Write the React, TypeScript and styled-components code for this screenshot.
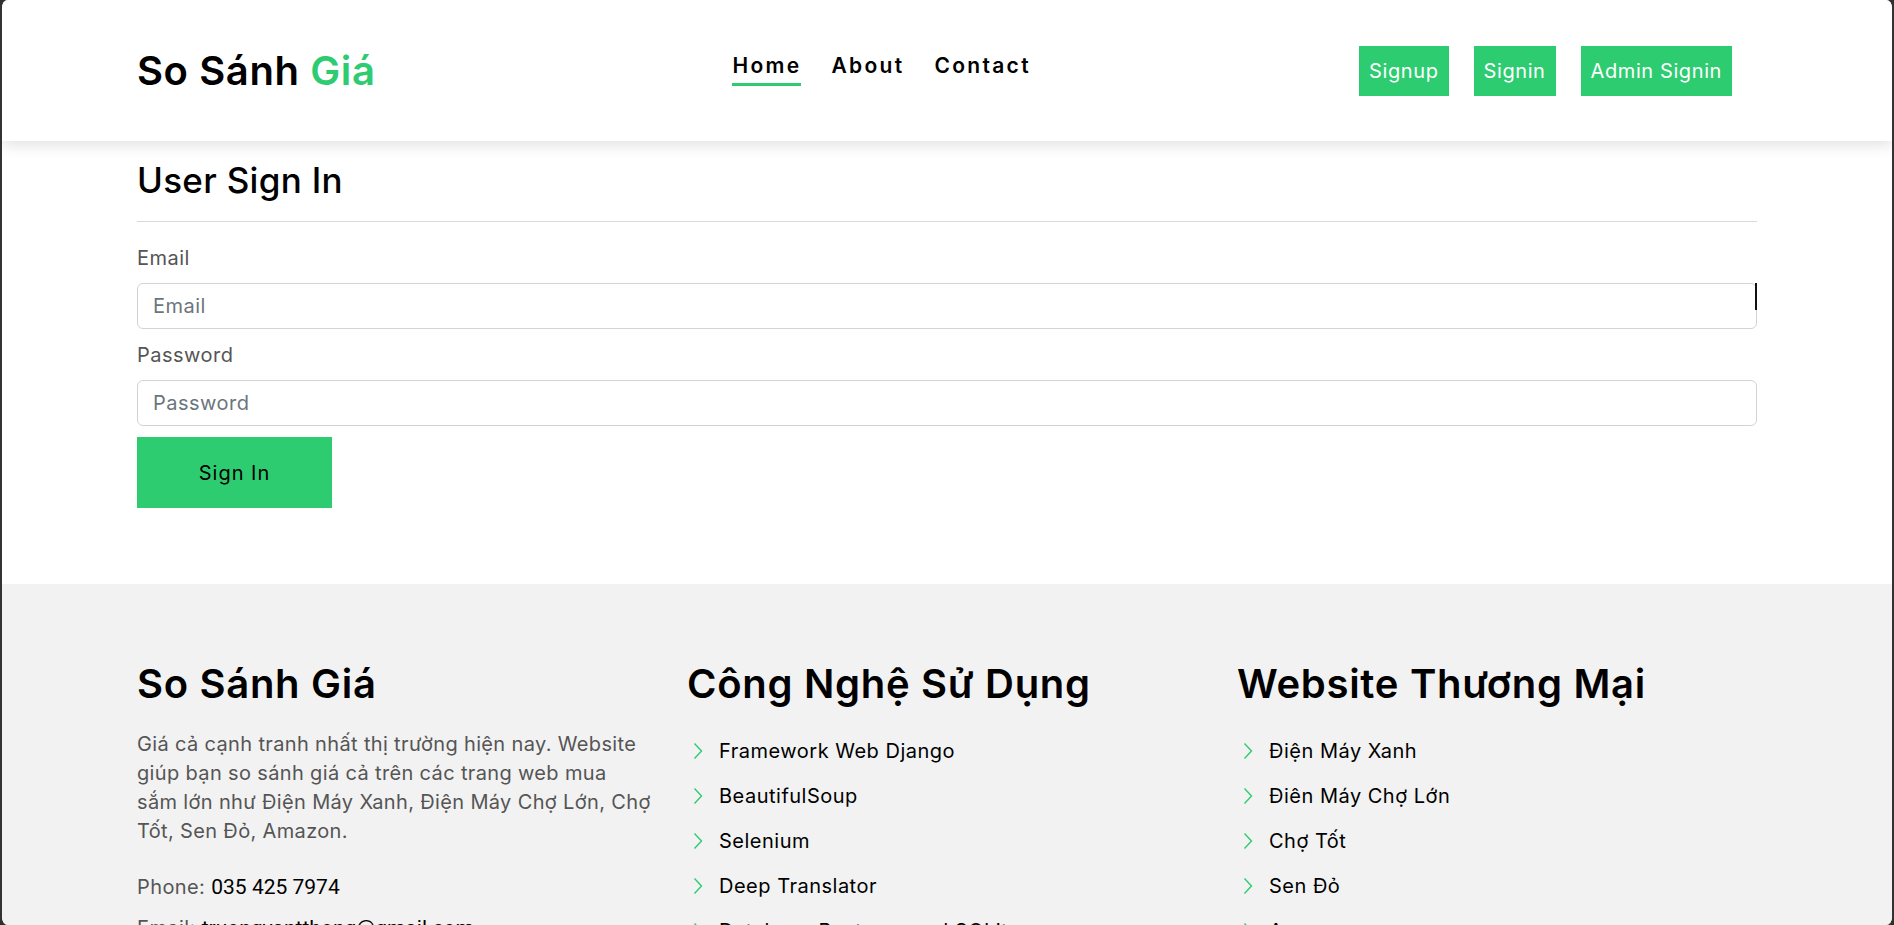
import React from "react";
import styled, { createGlobalStyle } from "styled-components";

const GREEN = "#2ecc71";

const Global = createGlobalStyle`
  html, body { margin: 0; padding: 0; background: #2f2f2f; }
  body { font-family: Inter, "Noto Sans", sans-serif; overflow: hidden; }
  * { box-sizing: border-box; }
`;

const Window = styled.div`
  height: 925px;
  background: #ffffff;
  border-left: 2px solid #333;
  border-right: 2px solid #333;
  border-radius: 8px;
  overflow: hidden;
  display: flex;
  flex-direction: column;
`;

const Container = styled.div`
  width: 1620px;
  margin: 0 auto;
`;

const Header = styled.header`
  position: relative;
  z-index: 2;
  height: 141px;
  background: #fff;
  box-shadow: 0 4px 14px rgba(0, 0, 0, 0.12);
  flex-shrink: 0;
`;

const HeaderInner = styled(Container)`
  height: 100%;
  display: flex;
  align-items: center;
`;

const Logo = styled.div`
  font-size: 40px;
  font-weight: 600;
  color: #000;
  letter-spacing: 0.6px;
  line-height: 48px;
  span { color: ${GREEN}; }
`;

const Nav = styled.nav`
  display: flex;
  gap: 30px;
  margin-left: 357px;
  align-self: flex-start;
  margin-top: 52px;
`;

const NavLink = styled.a<{ $active?: boolean }>`
  font-size: 21px;
  font-weight: 600;
  letter-spacing: 2.3px;
  color: #000;
  text-decoration: none;
  line-height: 28px;
  padding-bottom: 3px;
  border-bottom: 3px solid ${(p) => (p.$active ? GREEN : "transparent")};
`;

const Actions = styled.div`
  display: flex;
  gap: 25px;
  margin-left: auto;
  margin-right: 25px;
`;

const HeadButton = styled.a`
  height: 50px;
  display: flex;
  align-items: center;
  padding: 0 10px;
  background: ${GREEN};
  color: #fff;
  font-size: 20px;
  letter-spacing: 0.6px;
  text-decoration: none;
`;

const Main = styled(Container)`
  padding-top: 20px;
  padding-bottom: 76px;
  flex-shrink: 0;
`;

const Title = styled.h2`
  margin: 0;
  font-size: 35px;
  line-height: 38px;
  font-weight: 500;
  letter-spacing: 0.3px;
  color: #000;
`;

const Divider = styled.hr`
  margin: 22px 0 23px;
  border: 0;
  border-top: 1px solid #d9d9d9;
`;

const Field = styled.div`
  position: relative;
  margin-bottom: 13px;
`;

const Label = styled.label`
  display: block;
  font-size: 20px;
  letter-spacing: 0.5px;
  line-height: 26px;
  color: #555;
  margin-bottom: 12px;
`;

const Input = styled.input`
  display: block;
  width: 100%;
  height: 46px;
  padding: 0 15px;
  border: 1px solid #ced4da;
  border-radius: 6px;
  font-family: inherit;
  font-size: 20px;
  letter-spacing: 0.5px;
  color: #212529;
  background: #fff;
  &::placeholder { color: #6c757d; }
`;

const Cursor = styled.div`
  position: absolute;
  right: 0;
  top: 38px;
  width: 2px;
  height: 27px;
  background: #111;
`;

const SubmitButton = styled.button`
  margin-top: -2px;
  width: 195px;
  height: 71px;
  border: 0;
  background: ${GREEN};
  color: #000;
  font-family: inherit;
  font-size: 20px;
  letter-spacing: 1px;
`;

const Footer = styled.footer`
  flex: 1;
  background: #f2f2f2;
  padding-top: 78px;
`;

const Row = styled(Container)`
  display: grid;
  grid-template-columns: repeat(3, 1fr);
  column-gap: 30px;
`;

const Col = styled.div``;

const FootTitle = styled.h3`
  margin: 0;
  font-size: 40px;
  line-height: 44px;
  font-weight: 600;
  letter-spacing: 0.7px;
  color: #000;
`;

const Para = styled.p`
  margin: 24px 0 26px;
  font-size: 20px;
  letter-spacing: 0.35px;
  line-height: 29px;
  color: #555;
  white-space: nowrap;
`;

const Contact = styled.p`
  margin: 0 0 11px;
  font-size: 20px;
  letter-spacing: 0.4px;
  line-height: 30px;
  color: #555;
  b {
    font-weight: 400;
    letter-spacing: 0;
    color: #000;
    font-family: Roboto, "Liberation Sans", sans-serif;
    font-size: 21px;
  }
`;

const List = styled.ul`
  list-style: none;
  margin: 30px 0 0;
  padding: 0;
  display: flex;
  flex-direction: column;
  gap: 15px;
`;

const Item = styled.li`
  display: flex;
  align-items: center;
  gap: 16px;
  font-size: 20px;
  letter-spacing: 0.5px;
  line-height: 30px;
  color: #000;
  padding-left: 6px;
`;

const Chevron = () => (
  <svg width="10" height="18" viewBox="0 0 10 18" fill="none">
    <path d="M1.5 1.5 L8.5 9 L1.5 16.5" stroke={GREEN} strokeWidth="1.4" />
  </svg>
);

const tech = [
  "Framework Web Django",
  "BeautifulSoup",
  "Selenium",
  "Deep Translator",
  "Database Postgres and SQLite",
];

const shops = ["Điện Máy Xanh", "Điên Máy Chợ Lớn", "Chợ Tốt", "Sen Đỏ", "Amazon"];

const aboutLines = [
  "Giá cả cạnh tranh nhất thị trường hiện nay. Website",
  "giúp bạn so sánh giá cả trên các trang web mua",
  "sắm lớn như Điện Máy Xanh, Điện Máy Chợ Lớn, Chợ",
  "Tốt, Sen Đỏ, Amazon.",
];

export default function App() {
  return (
    <>
      <Global />
      <Window>
        <Header>
          <HeaderInner>
            <Logo>
              So Sánh <span>Giá</span>
            </Logo>
            <Nav>
              <NavLink $active href="#">Home</NavLink>
              <NavLink href="#">About</NavLink>
              <NavLink href="#">Contact</NavLink>
            </Nav>
            <Actions>
              <HeadButton href="#">Signup</HeadButton>
              <HeadButton href="#">Signin</HeadButton>
              <HeadButton href="#">Admin Signin</HeadButton>
            </Actions>
          </HeaderInner>
        </Header>
        <Main>
          <Title>User Sign In</Title>
          <Divider />
          <Field>
            <Label>Email</Label>
            <Input placeholder="Email" />
            <Cursor />
          </Field>
          <Field>
            <Label>Password</Label>
            <Input type="password" placeholder="Password" />
          </Field>
          <SubmitButton>Sign In</SubmitButton>
        </Main>
        <Footer>
          <Row>
            <Col>
              <FootTitle>So Sánh Giá</FootTitle>
              <Para>
                {aboutLines.map((l, i) => (
                  <React.Fragment key={i}>
                    {l}
                    {i < aboutLines.length - 1 && <br />}
                  </React.Fragment>
                ))}
              </Para>
              <Contact>
                Phone: <b>035 425 7974</b>
              </Contact>
              <Contact>
                Email: <b>truongvantthong@gmail.com</b>
              </Contact>
            </Col>
            <Col>
              <FootTitle>Công Nghệ Sử Dụng</FootTitle>
              <List>
                {tech.map((t) => (
                  <Item key={t}>
                    <Chevron />
                    {t}
                  </Item>
                ))}
              </List>
            </Col>
            <Col>
              <FootTitle>Website Thương Mại</FootTitle>
              <List>
                {shops.map((t) => (
                  <Item key={t}>
                    <Chevron />
                    {t}
                  </Item>
                ))}
              </List>
            </Col>
          </Row>
        </Footer>
      </Window>
    </>
  );
}
